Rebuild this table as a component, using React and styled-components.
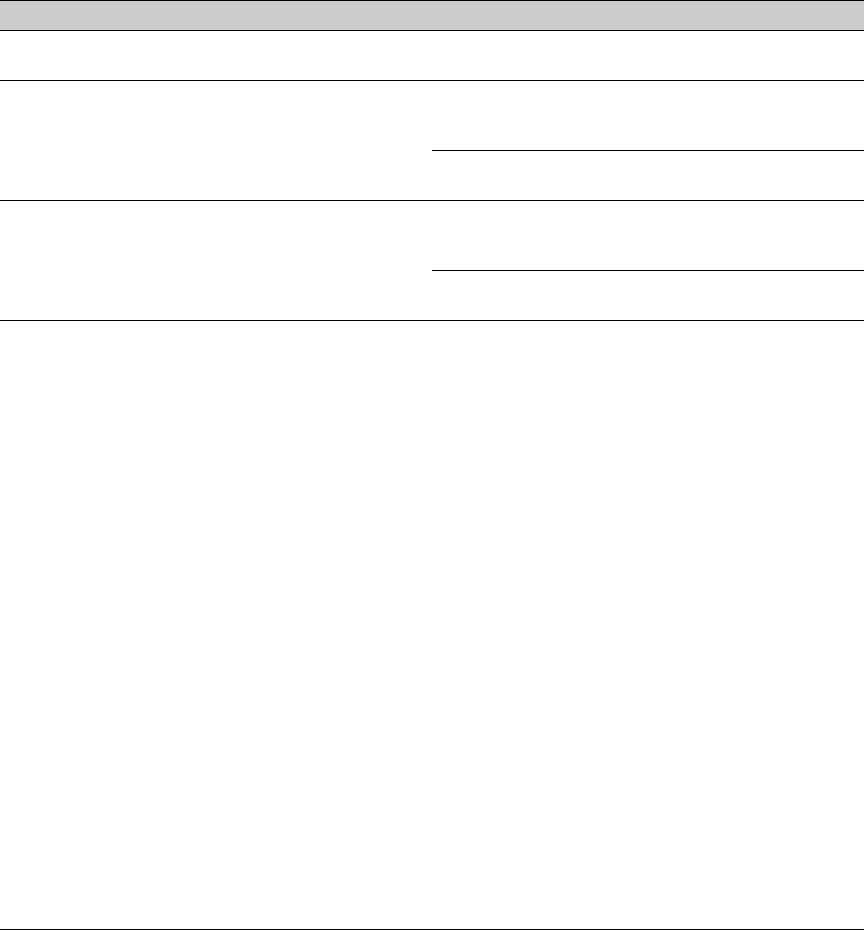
import styled, { createGlobalStyle } from 'styled-components';

const GlobalStyle = createGlobalStyle`
    html, body {
        margin: 0;
        padding: 0;
        background: #ffffff;
        font-family: "Liberation Sans", Arial, sans-serif;
    }
`

const Table = styled.div`
    width: 864px;
    display: flex;
    flex-direction: column;
    border-top: 1px solid #000;
`

const HeaderRow = styled.div`
    height: 29px;
    background-color: #cccccc;
    border-bottom: 1px solid #000;
`

const Row = styled.div`
    height: ${props => props.height}px;
    border-bottom: 1px solid #000;
`

const GroupRow = styled.div`
    display: grid;
    grid-template-columns: 432px 432px;
    border-bottom: 1px solid #000;
`

const GroupLabel = styled.div``

const SubCells = styled.div`
    display: flex;
    flex-direction: column;
`

const SubCell = styled.div`
    height: ${props => props.height}px;
    border-bottom: ${props => props.divider ? '1px solid #000' : 'none'};
`

function Group() {
    return (
        <GroupRow>
            <GroupLabel />
            <SubCells>
                <SubCell height={69} divider />
                <SubCell height={49} />
            </SubCells>
        </GroupRow>
    )
}

export default function App() {
    return (
        <>
            <GlobalStyle />
            <Table>
                <HeaderRow />
                <Row height={49} />
                <Group />
                <Group />
                <Row height={608} />
            </Table>
        </>
    )
}
